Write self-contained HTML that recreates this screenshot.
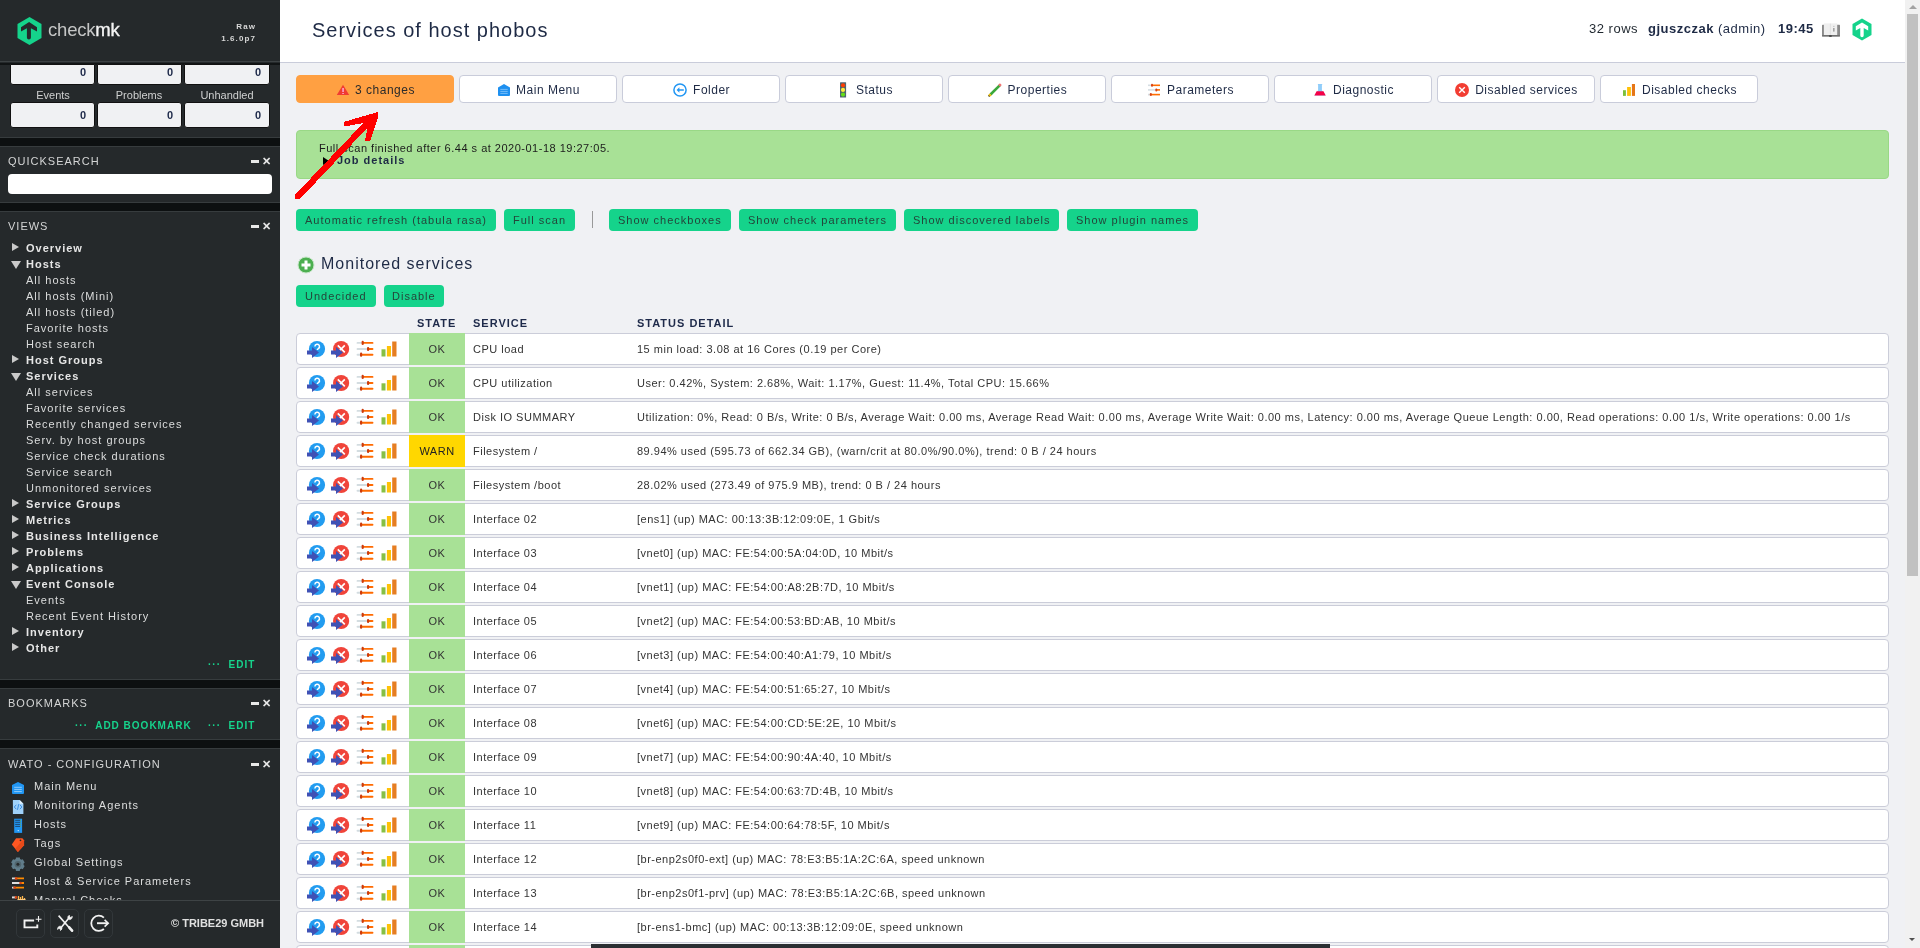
<!DOCTYPE html><html><head><meta charset="utf-8"><style>
*{box-sizing:border-box;margin:0;padding:0}
html,body{width:1920px;height:948px;overflow:hidden;font-family:"Liberation Sans",sans-serif;background:#f0f1f4}
#side,#main{will-change:transform}
.a{position:absolute;white-space:nowrap}
#side{position:absolute;left:0;top:0;width:280px;height:948px;background:#25292b;overflow:hidden;color:#dcdddd}
#main{position:absolute;left:280px;top:0;width:1625px;height:948px;background:#f0f1f4;overflow:hidden;color:#1e262e}
.sb{font-size:11px;letter-spacing:1px;line-height:16px}
.sbh{font-weight:bold;color:#e6e6e6}
.tri{position:absolute;width:0;height:0}
.tr{border-left:7.7px solid #c9c9c9;border-top:4.2px solid transparent;border-bottom:4.2px solid transparent}
.td{border-top:8.5px solid #c9c9c9;border-left:5px solid transparent;border-right:5px solid transparent}
.snap{position:absolute;left:0;width:280px;border-top:1px solid #373c3e;border-bottom:1px solid #373c3e;background:#25292b}
.stitle{position:absolute;left:8px;font-size:11px;letter-spacing:1px;color:#d4d5d5}
.mini{position:absolute;left:251px;width:8px;height:3px;background:#e8e8e8}
.clo{position:absolute;left:262px;font-size:11px;font-weight:bold;color:#e8e8e8;line-height:10px}
.tbox{position:absolute;height:21px;width:85px;background:#f0f1f3;border:1px solid #111;border-radius:3px;font-size:11px;font-weight:bold;color:#1e2a4a;text-align:right;padding-right:7px;line-height:14px}
.green{color:#16d38c;font-weight:bold;font-size:10px}
.cb{position:absolute;top:75px;height:28px;width:158px;background:#fff;border:1px solid #c9ccda;border-radius:4px;font-size:12px;letter-spacing:0.5px;color:#1e262e;text-align:center;line-height:28px}
.gb{position:absolute;height:22px;background:#15d38b;border-radius:4px;font-size:11px;letter-spacing:1px;color:#24453a;line-height:22px;padding:0 9px}
.row{position:absolute;left:16px;width:1593px;height:32px;background:#fff;border:1px solid #cbcdd9;border-radius:4px;font-size:11px;letter-spacing:0.5px;color:#333}
.st{position:absolute;left:112px;top:-1px;width:56px;height:32px;background:#a8e196;text-align:center;line-height:33px;color:#333}
.warn{background:#ffd700;color:#222}
.sv{position:absolute;left:176px;top:0;line-height:30px}
.dt{position:absolute;left:340px;top:0;line-height:30px}
.hd{position:absolute;top:317px;font-size:11px;font-weight:bold;letter-spacing:1px;color:#1e2a4a}
</style></head><body>
<div id="side">
<div class="a" style="left:0;top:0;width:280px;height:62px;background:#25292b;border-bottom:1px solid #3c4143"></div>
<svg class="a" style="left:16px;top:16px" width="27" height="30" viewBox="0 0 27 30"><path d="M13.5 1L25.5 8v14L13.5 29 1.5 22V8z" fill="#15d38b"/><path d="M13.1 5.9L5 11.2v4.3l5.9-3.3v9.3a2 2 0 0 0 4 0v-9.3l6.1 3.3v-4.3z" fill="#25292b"/></svg>
<div class="a" style="left:48px;top:19px;font-size:18.5px;color:#c4c5c5;letter-spacing:-0.2px">check<span style="color:#f4f4f4;-webkit-text-stroke:0.35px #f4f4f4">mk</span></div>
<div class="a" style="left:210px;top:21px;width:46px;text-align:right;font-size:8px;font-weight:bold;letter-spacing:1.1px;color:#d8d8d8;line-height:12px">Raw<br>1.6.0p7</div>
<div class="a" style="left:0;top:63px;width:280px;height:75px;background:#25292b;border-bottom:1px solid #373c3e"></div>
<div class="a" style="left:0;top:63px;width:280px;height:2px;background:#111415"></div>
<div class="tbox" style="left:10px;top:64px;height:21px;padding-top:0;padding-right:8px;border-radius:0 0 3px 3px">0</div>
<div class="tbox" style="left:10px;top:102px;height:26px;padding-top:5px;padding-right:8px">0</div>
<div class="tbox" style="left:97px;top:64px;height:21px;padding-top:0;padding-right:8px;border-radius:0 0 3px 3px">0</div>
<div class="tbox" style="left:97px;top:102px;height:26px;padding-top:5px;padding-right:8px">0</div>
<div class="tbox" style="left:184px;top:64px;height:21px;padding-top:0;padding-right:8px;border-radius:0 0 3px 3px;width:86px">0</div>
<div class="tbox" style="left:184px;top:102px;height:26px;padding-top:5px;padding-right:8px;width:86px">0</div>
<div class="a" style="left:3px;width:100px;text-align:center;top:89px;font-size:11px;color:#cfd0d0">Events</div>
<div class="a" style="left:89px;width:100px;text-align:center;top:89px;font-size:11px;color:#cfd0d0">Problems</div>
<div class="a" style="left:177px;width:100px;text-align:center;top:89px;font-size:11px;color:#cfd0d0">Unhandled</div>
<div class="a" style="left:0;top:138px;width:280px;height:8px;background:#0d1011"></div>
<div class="snap" style="top:146px;height:57px"></div>
<div class="stitle" style="top:155px">QUICKSEARCH</div>
<div class="mini" style="top:160px"></div><div class="clo" style="top:156px">&#x2715;</div>
<div class="a" style="left:8px;top:174px;width:264px;height:20px;background:#fff;border-radius:4px"></div>
<div class="a" style="left:0;top:203px;width:280px;height:8px;background:#0d1011"></div>
<div class="snap" style="top:211px;height:469px"></div>
<div class="stitle" style="top:220px">VIEWS</div>
<div class="mini" style="top:225px"></div><div class="clo" style="top:221px">&#x2715;</div>
<div class="a sb sbh" style="left:26px;top:240px">Overview</div>
<div class="tri tr" style="left:12px;top:243px"></div>
<div class="a sb sbh" style="left:26px;top:256px">Hosts</div>
<div class="tri td" style="left:11px;top:261px"></div>
<div class="a sb" style="left:26px;top:272px">All hosts</div>
<div class="a sb" style="left:26px;top:288px">All hosts (Mini)</div>
<div class="a sb" style="left:26px;top:304px">All hosts (tiled)</div>
<div class="a sb" style="left:26px;top:320px">Favorite hosts</div>
<div class="a sb" style="left:26px;top:336px">Host search</div>
<div class="a sb sbh" style="left:26px;top:352px">Host Groups</div>
<div class="tri tr" style="left:12px;top:355px"></div>
<div class="a sb sbh" style="left:26px;top:368px">Services</div>
<div class="tri td" style="left:11px;top:373px"></div>
<div class="a sb" style="left:26px;top:384px">All services</div>
<div class="a sb" style="left:26px;top:400px">Favorite services</div>
<div class="a sb" style="left:26px;top:416px">Recently changed services</div>
<div class="a sb" style="left:26px;top:432px">Serv. by host groups</div>
<div class="a sb" style="left:26px;top:448px">Service check durations</div>
<div class="a sb" style="left:26px;top:464px">Service search</div>
<div class="a sb" style="left:26px;top:480px">Unmonitored services</div>
<div class="a sb sbh" style="left:26px;top:496px">Service Groups</div>
<div class="tri tr" style="left:12px;top:499px"></div>
<div class="a sb sbh" style="left:26px;top:512px">Metrics</div>
<div class="tri tr" style="left:12px;top:515px"></div>
<div class="a sb sbh" style="left:26px;top:528px">Business Intelligence</div>
<div class="tri tr" style="left:12px;top:531px"></div>
<div class="a sb sbh" style="left:26px;top:544px">Problems</div>
<div class="tri tr" style="left:12px;top:547px"></div>
<div class="a sb sbh" style="left:26px;top:560px">Applications</div>
<div class="tri tr" style="left:12px;top:563px"></div>
<div class="a sb sbh" style="left:26px;top:576px">Event Console</div>
<div class="tri td" style="left:11px;top:581px"></div>
<div class="a sb" style="left:26px;top:592px">Events</div>
<div class="a sb" style="left:26px;top:608px">Recent Event History</div>
<div class="a sb sbh" style="left:26px;top:624px">Inventory</div>
<div class="tri tr" style="left:12px;top:627px"></div>
<div class="a sb sbh" style="left:26px;top:640px">Other</div>
<div class="tri tr" style="left:12px;top:643px"></div>
<div class="a sb green" style="left:208px;top:657px">&middot;&middot;&middot;&nbsp; EDIT</div>
<div class="a" style="left:0;top:680px;width:280px;height:8px;background:#0d1011"></div>
<div class="snap" style="top:688px;height:52px"></div>
<div class="stitle" style="top:697px">BOOKMARKS</div>
<div class="mini" style="top:702px"></div><div class="clo" style="top:698px">&#x2715;</div>
<div class="a sb green" style="left:75px;top:718px">&middot;&middot;&middot;&nbsp; ADD BOOKMARK</div>
<div class="a sb green" style="left:208px;top:718px">&middot;&middot;&middot;&nbsp; EDIT</div>
<div class="a" style="left:0;top:740px;width:280px;height:8px;background:#0d1011"></div>
<div class="snap" style="top:748px;height:160px"></div>
<div class="stitle" style="top:758px">WATO - CONFIGURATION</div>
<div class="mini" style="top:763px"></div><div class="clo" style="top:759px">&#x2715;</div>
<div class="a sb" style="left:34px;top:778px">Main Menu</div>
<div class="a sb" style="left:34px;top:797px">Monitoring Agents</div>
<div class="a sb" style="left:34px;top:816px">Hosts</div>
<div class="a sb" style="left:34px;top:835px">Tags</div>
<div class="a sb" style="left:34px;top:854px">Global Settings</div>
<div class="a sb" style="left:34px;top:873px">Host &amp; Service Parameters</div>
<div class="a sb" style="left:34px;top:892px">Manual Checks</div>
<svg class="a" style="left:10px;top:780px" width="18" height="125" viewBox="0 0 18 125"><path d="M2 5.1L8 2l6 3.1V13a1 1 0 0 1-1 1H3a1 1 0 0 1-1-1z" fill="#2196f3"/><path d="M4.2 7.3h7.6M4.2 9.4h7.6M4.2 11.6h7.6" stroke="#9dd0fb" stroke-width=".9"/><path d="M2.9 20h6.7l3.8 3.8V33.9H2.9z" fill="#9fd1fa"/><path d="M9.6 20l3.8 3.8H9.6z" fill="#e3f2fd"/><path d="M6.3 24.8l-2 2.2 2 2.2M9.9 24.8l2 2.2-2 2.2M8.7 24.2l-1.2 5.6" stroke="#2f86e0" stroke-width=".9" fill="none"/><rect x="4.2" y="38.7" width="7.9" height="14.2" fill="#2196f3"/><path d="M5.2 40.3h5.5M5.2 42.3h5.5M5.2 44.4h5.5M5.2 46.4h5.5" stroke="#1b3550" stroke-width=".8"/><circle cx="10.6" cy="40.3" r=".5" fill="#8bc34a"/><circle cx="10.6" cy="42.3" r=".5" fill="#8bc34a"/><circle cx="10.6" cy="44.4" r=".5" fill="#8bc34a"/><circle cx="10.6" cy="46.4" r=".5" fill="#8bc34a"/><circle cx="8.2" cy="50.6" r=".6" fill="#fff"/><path d="M6.1 58.3h6.3l1.65 1.9v5.1L7.9 72 1.8 64.6z" fill="#ff5722"/><path d="M14.05 60.2v5.1L7.9 72 5.2 68.8 12.4 60.4z" fill="#e64a19"/><circle cx="10.5" cy="60.3" r=".9" fill="#25292b"/><g transform="translate(7.9 84.2)"><path d="M-2.20 -4.93 L-1.93 -6.73 L1.93 -6.73 L2.20 -4.93 L3.17 -4.37 L4.86 -5.04 L6.79 -1.69 L5.37 -0.56 L5.37 0.56 L6.79 1.69 L4.86 5.04 L3.17 4.37 L2.20 4.93 L1.93 6.73 L-1.93 6.73 L-2.20 4.93 L-3.17 4.37 L-4.86 5.04 L-6.79 1.69 L-5.37 0.56 L-5.37 -0.56 L-6.79 -1.69 L-4.86 -5.04 L-3.17 -4.37z" fill="#607d8b"/><circle r="5.5" fill="#607d8b"/><circle r="3.3" fill="#51666f"/><circle r="1.5" fill="#25292b"/></g><path d="M2 98.4h4M2 103h8.5M2 107.6h3" stroke="#dedede" stroke-width="1.9"/><path d="M6 98.4h8M10.5 103h3.5M5 107.6h9" stroke="#ff8a00" stroke-width="1.9"/><circle cx="6.1" cy="98.4" r="1.3" fill="#d84315"/><circle cx="10.5" cy="103" r="1.3" fill="#d84315"/><circle cx="4.6" cy="107.6" r="1.3" fill="#d84315"/><path d="M2 117.4h4" stroke="#dedede" stroke-width="1.9"/><circle cx="6" cy="117.4" r="1.3" fill="#d84315"/><path d="M8.5 116v4.5M10.5 117v3.5M12.5 116v4.5M14.5 118v2.5" stroke="#ffb74d" stroke-width="1.3"/><path d="M7.5 119.5h8" stroke="#ffcc80" stroke-width="1"/></svg>
<div class="a" style="left:0;top:900px;width:280px;height:48px;background:#25292b;border-top:1px solid #3e4345"></div>
<div class="a" style="left:16px;top:909px;width:29px;height:29px;border:1px solid #32373a;border-radius:5px"></div>
<div class="a" style="left:50px;top:909px;width:29px;height:29px;border:1px solid #32373a;border-radius:5px"></div>
<div class="a" style="left:84px;top:909px;width:29px;height:29px;border:1px solid #32373a;border-radius:5px"></div>
<svg class="a" style="left:16px;top:909px" width="100" height="29" viewBox="0 0 100 29"><path d="M18.1 11.5H8.5V18.4H21.3V15.5" fill="none" stroke="#f2f2f2" stroke-width="1.9"/><path d="M22.5 7v5.8M19.7 10.3h5.8" stroke="#f2f2f2" stroke-width="1.1"/><path d="M42.6 6.6L54.6 20.2" stroke="#f2f2f2" stroke-width="1.6"/><path d="M53.2 18.3l2.9 3.4" stroke="#f2f2f2" stroke-width="2.6" stroke-linecap="round"/><path d="M53.5 8.2L44.4 19.6" stroke="#f2f2f2" stroke-width="1.6"/><path d="M52.2 9.8a2.6 2.6 0 0 1 1.1-3.5l.4 1.9 1.4.3 1-1.2a2.6 2.6 0 0 1-2.6 3.3zM45.6 18a2.6 2.6 0 0 1-1.1 3.5l-.4-1.9-1.4-.3-1 1.2a2.6 2.6 0 0 1 2.6-3.3z" fill="#f2f2f2" stroke="#f2f2f2" stroke-width=".8"/><path d="M87.9 8.6A7.6 7.6 0 1 0 87.9 20" fill="none" stroke="#f2f2f2" stroke-width="1.8"/><path d="M81 14.2h11" stroke="#f2f2f2" stroke-width="1.9"/><path d="M88.6 10.8l3.6 3.4-3.6 3.4" fill="none" stroke="#f2f2f2" stroke-width="1.6"/></svg>
<div class="a" style="left:171px;top:917px;font-size:11px;font-weight:bold;color:#e0e0e0">&copy; TRIBE29 GMBH</div>
</div>
<div id="main">
<div class="a" style="left:0;top:0;width:1625px;height:63px;background:#fff;border-bottom:1px solid #c9ccda"></div>
<div class="a" style="left:32px;top:19px;font-size:20px;letter-spacing:1px;color:#1e2a45">Services of host phobos</div>
<div class="a" style="left:1309px;top:21px;font-size:13px;letter-spacing:0.5px;color:#1e262e">32 rows</div>
<div class="a" style="left:1368px;top:21px;font-size:13px;letter-spacing:0.5px;color:#1e2a45"><b>gjuszczak</b> (admin)</div>
<div class="a" style="left:1498px;top:21px;font-size:13px;letter-spacing:0.5px;font-weight:bold;color:#1e2a45">19:45</div>
<svg class="a" style="left:1541px;top:22px" width="20" height="17" viewBox="0 0 20 17"><rect x="1" y="2.8" width="18" height="11.7" rx=".6" fill="#8a8a8a"/><rect x="2.9" y="1.4" width="13.3" height="11.6" fill="#efefef"/><path d="M9.4 1.6v11.2" stroke="#dcdcdc" stroke-width=".8"/><rect x="12" y="6" width="1.6" height="3.6" fill="#a3a3a3"/><rect x="12" y="3.9" width="1.6" height=".8" fill="#bbb"/><path d="M1.2 13.2h17.6v1.2H1.2z" fill="#6a6a6a"/><ellipse cx="9.4" cy="14" rx="1.6" ry=".9" fill="#4a4a4a"/></svg>
<svg class="a" style="left:1571px;top:18px" width="22" height="23" viewBox="0 0 22 23"><path d="M11 0.5L20.5 6v11L11 22.5 1.5 17V6z" fill="#15d38b"/><path d="M11 4.5L4.8 8.3v4.1l4.5-2.4V17.5a1.7 1.7 0 0 0 3.4 0V10l4.5 2.4V8.3z" fill="#fff"/></svg>
<div class="cb" style="left:16px;background:#ffa042;border-color:#ffa042"></div>
<div class="a" style="left:75.1px;top:83px;font-size:12px;letter-spacing:0.5px;color:#2b2b2b">3 changes</div>
<div class="cb" style="left:179px"></div>
<div class="a" style="left:236.1px;top:83px;font-size:12px;letter-spacing:0.5px;color:#1e2a45">Main Menu</div>
<div class="cb" style="left:342px"></div>
<div class="a" style="left:413.1px;top:83px;font-size:12px;letter-spacing:0.5px;color:#1e2a45">Folder</div>
<div class="cb" style="left:505px"></div>
<div class="a" style="left:575.9px;top:83px;font-size:12px;letter-spacing:0.5px;color:#1e2a45">Status</div>
<div class="cb" style="left:668px"></div>
<div class="a" style="left:727.6px;top:83px;font-size:12px;letter-spacing:0.5px;color:#1e2a45">Properties</div>
<div class="cb" style="left:831px"></div>
<div class="a" style="left:887.0px;top:83px;font-size:12px;letter-spacing:0.5px;color:#1e2a45">Parameters</div>
<div class="cb" style="left:994px"></div>
<div class="a" style="left:1053.0px;top:83px;font-size:12px;letter-spacing:0.5px;color:#1e2a45">Diagnostic</div>
<div class="cb" style="left:1157px"></div>
<div class="a" style="left:1195.2px;top:83px;font-size:12px;letter-spacing:0.5px;color:#1e2a45">Disabled services</div>
<div class="cb" style="left:1320px"></div>
<div class="a" style="left:1362.0px;top:83px;font-size:12px;letter-spacing:0.5px;color:#1e2a45">Disabled checks</div>
<svg class="a" style="left:-280px;top:0" width="1920" height="110" viewBox="0 0 1920 110"><path d="M343 84.7L349.2 95H336.8z" fill="#f03c32"/><path d="M342.4 88h1.3v4h-1.3zM342.4 93h1.3v1.1h-1.3z" fill="#fbe"/><path d="M498 87.5L504 84l6 3.5V95a1 1 0 0 1-1 1h-10a1 1 0 0 1-1-1z" fill="#1e90f0"/><path d="M500.3 89.4h7.4M500.3 91.4h7.4M500.3 93.4h7.4" stroke="#8cc8fa" stroke-width=".8"/><circle cx="680" cy="90" r="6.1" fill="none" stroke="#2196f3" stroke-width="1.5"/><path d="M676.6 90l2.8-2.7v1.9h4.4v1.6h-4.4v1.9z" fill="#2196f3"/><rect x="840" y="82.3" width="6.1" height="15.2" rx=".5" fill="#4f6470"/><circle cx="843" cy="85.3" r="2.1" fill="#ff3d00"/><circle cx="843" cy="89.9" r="2.1" fill="#ffeb3b"/><circle cx="843" cy="94.6" r="2.1" fill="#64dd17"/><path d="M990.5 94.5L999.7 85.3" stroke="#3aa83a" stroke-width="2.6"/><path d="M999.2 85.8l1.6-1.6" stroke="#f07070" stroke-width="2.6"/><path d="M988.8 96.2l1.9-1.9" stroke="#e8b800" stroke-width="2.4"/><path d="M988.6 96.4l.6-.6" stroke="#333" stroke-width="1.5"/><g stroke-width="1.6"><path d="M1148 85.3h3" stroke="#d5dde2"/><path d="M1152 85.3h8" stroke="#ff6d00"/><path d="M1148 89.9h7.5" stroke="#d5dde2"/><path d="M1156 89.9h4" stroke="#ff6d00"/><path d="M1148 94.6h2" stroke="#d5dde2"/><path d="M1151 94.6h9" stroke="#ff6d00"/></g><rect x="1151" y="83.8" width="2" height="3" rx="1" fill="#d84315"/><rect x="1155.3" y="88.4" width="2" height="3" rx="1" fill="#d84315"/><rect x="1149.8" y="93.1" width="2" height="3" rx="1" fill="#d84315"/><path d="M1317.9 84h4.3v1h-.3v5.3l3.8 5.2h-11.4l3.8-5.2V85h-.2z" fill="#90cdfa"/><path d="M1316.6 91.2h6.9l2.2 4.3h-11.3z" fill="#f50047"/><circle cx="1462" cy="90" r="7" fill="#f23d32"/><path d="M1459.2 87.2l5.6 5.6M1464.8 87.2l-5.6 5.6" stroke="#fff" stroke-width="1.4"/><rect x="1623" y="90.2" width="2.9" height="5.7" fill="#7cc03a"/><rect x="1627.1" y="87" width="3.8" height="8.9" fill="#ffc107"/><rect x="1631.9" y="84" width="3.1" height="11.9" fill="#e67617"/></svg>
<div class="a" style="left:16px;top:130px;width:1593px;height:49px;background:#a8e196;border:1px solid #99d886;border-radius:4px"></div>
<div class="a" style="left:39px;top:142px;font-size:11px;letter-spacing:0.5px;color:#1c1c1c">Full scan finished after 6.44 s at 2020-01-18 19:27:05.</div>
<div class="a" style="left:42px;top:154px;font-size:11px;font-weight:bold;letter-spacing:1px;color:#1e2a45"><span style="display:inline-block;width:0;height:0;border-left:6px solid #000;border-top:4.8px solid transparent;border-bottom:4.8px solid transparent;margin-right:8px;margin-left:1px;vertical-align:-1px"></span>Job details</div>
<div class="gb" style="left:16px;top:209px">Automatic refresh (tabula rasa)</div>
<div class="gb" style="left:224px;top:209px">Full scan</div>
<div class="gb" style="left:329px;top:209px">Show checkboxes</div>
<div class="gb" style="left:459px;top:209px">Show check parameters</div>
<div class="gb" style="left:624px;top:209px;padding-right:8px">Show discovered labels</div>
<div class="gb" style="left:787px;top:209px">Show plugin names</div>
<div class="a" style="left:312px;top:211px;width:1px;height:17px;background:#999"></div>
<svg class="a" style="left:17px;top:256px" width="18" height="18" viewBox="0 0 18 18"><circle cx="9" cy="9" r="8" fill="#4caf50" stroke="#c8e6c9" stroke-width="1"/><path d="M9 4.5v9M4.5 9h9" stroke="#fff" stroke-width="3"/></svg>
<div class="a" style="left:41px;top:255px;font-size:16px;letter-spacing:1px;color:#1e2a45">Monitored services</div>
<div class="gb" style="left:16px;top:285px">Undecided</div>
<div class="gb" style="left:104px;top:285px;padding:0 8px">Disable</div>
<div class="hd" style="left:137px">STATE</div><div class="hd" style="left:193px">SERVICE</div><div class="hd" style="left:357px">STATUS DETAIL</div>
<div class="row" style="top:333px"><svg class="a" style="left:9px;top:5px" width="100" height="22" viewBox="0 0 100 22"><circle cx="11" cy="10" r="8.1" fill="#229cf0"/><path d="M8.9 7.6a2.3 2.3 0 1 1 3.4 2c-.8.45-1 .8-1 1.5" stroke="#fff" stroke-width="1.5" fill="none"/><path d="M1 11.5h5V8l7 5.6-7 5.4v-3.4H1z" fill="#3f51b5"/><circle cx="35.1" cy="10" r="8.1" fill="#f0443a"/><path d="M31.8 6.4l7 7M38.8 6.4l-7 7" stroke="#fff" stroke-width="1.6"/><path d="M25 11.5h5V8l7 5.6-7 5.4v-3.4H25z" fill="#3f51b5"/><g stroke-linecap="round" stroke-width="1.9"><path d="M51.5 3.9h4.5" stroke="#d3dce0"/><path d="M57 3.9h9.5" stroke="#ff6a00"/><path d="M51.5 10h10" stroke="#d3dce0"/><path d="M62.5 10h4" stroke="#ff6a00"/><path d="M51.5 15.7h3" stroke="#d3dce0"/><path d="M55.5 15.7h11" stroke="#ff6a00"/></g><rect x="55.6" y="1.8" width="2.2" height="4.2" rx="1.1" fill="#cc3b0c"/><rect x="61" y="7.9" width="2.2" height="4.2" rx="1.1" fill="#cc3b0c"/><rect x="54" y="13.6" width="2.2" height="4.2" rx="1.1" fill="#cc3b0c"/><rect x="75.5" y="10.3" width="4" height="7.2" fill="#86c044"/><rect x="80.9" y="7" width="4.1" height="10.5" fill="#ffc107"/><rect x="86.2" y="2.5" width="4.3" height="15" fill="#e67e22"/></svg><div class="st">OK</div><div class="sv">CPU load</div><div class="dt">15 min load: 3.08 at 16 Cores (0.19 per Core)</div></div>
<div class="row" style="top:367px"><svg class="a" style="left:9px;top:5px" width="100" height="22" viewBox="0 0 100 22"><circle cx="11" cy="10" r="8.1" fill="#229cf0"/><path d="M8.9 7.6a2.3 2.3 0 1 1 3.4 2c-.8.45-1 .8-1 1.5" stroke="#fff" stroke-width="1.5" fill="none"/><path d="M1 11.5h5V8l7 5.6-7 5.4v-3.4H1z" fill="#3f51b5"/><circle cx="35.1" cy="10" r="8.1" fill="#f0443a"/><path d="M31.8 6.4l7 7M38.8 6.4l-7 7" stroke="#fff" stroke-width="1.6"/><path d="M25 11.5h5V8l7 5.6-7 5.4v-3.4H25z" fill="#3f51b5"/><g stroke-linecap="round" stroke-width="1.9"><path d="M51.5 3.9h4.5" stroke="#d3dce0"/><path d="M57 3.9h9.5" stroke="#ff6a00"/><path d="M51.5 10h10" stroke="#d3dce0"/><path d="M62.5 10h4" stroke="#ff6a00"/><path d="M51.5 15.7h3" stroke="#d3dce0"/><path d="M55.5 15.7h11" stroke="#ff6a00"/></g><rect x="55.6" y="1.8" width="2.2" height="4.2" rx="1.1" fill="#cc3b0c"/><rect x="61" y="7.9" width="2.2" height="4.2" rx="1.1" fill="#cc3b0c"/><rect x="54" y="13.6" width="2.2" height="4.2" rx="1.1" fill="#cc3b0c"/><rect x="75.5" y="10.3" width="4" height="7.2" fill="#86c044"/><rect x="80.9" y="7" width="4.1" height="10.5" fill="#ffc107"/><rect x="86.2" y="2.5" width="4.3" height="15" fill="#e67e22"/></svg><div class="st">OK</div><div class="sv">CPU utilization</div><div class="dt">User: 0.42%, System: 2.68%, Wait: 1.17%, Guest: 11.4%, Total CPU: 15.66%</div></div>
<div class="row" style="top:401px"><svg class="a" style="left:9px;top:5px" width="100" height="22" viewBox="0 0 100 22"><circle cx="11" cy="10" r="8.1" fill="#229cf0"/><path d="M8.9 7.6a2.3 2.3 0 1 1 3.4 2c-.8.45-1 .8-1 1.5" stroke="#fff" stroke-width="1.5" fill="none"/><path d="M1 11.5h5V8l7 5.6-7 5.4v-3.4H1z" fill="#3f51b5"/><circle cx="35.1" cy="10" r="8.1" fill="#f0443a"/><path d="M31.8 6.4l7 7M38.8 6.4l-7 7" stroke="#fff" stroke-width="1.6"/><path d="M25 11.5h5V8l7 5.6-7 5.4v-3.4H25z" fill="#3f51b5"/><g stroke-linecap="round" stroke-width="1.9"><path d="M51.5 3.9h4.5" stroke="#d3dce0"/><path d="M57 3.9h9.5" stroke="#ff6a00"/><path d="M51.5 10h10" stroke="#d3dce0"/><path d="M62.5 10h4" stroke="#ff6a00"/><path d="M51.5 15.7h3" stroke="#d3dce0"/><path d="M55.5 15.7h11" stroke="#ff6a00"/></g><rect x="55.6" y="1.8" width="2.2" height="4.2" rx="1.1" fill="#cc3b0c"/><rect x="61" y="7.9" width="2.2" height="4.2" rx="1.1" fill="#cc3b0c"/><rect x="54" y="13.6" width="2.2" height="4.2" rx="1.1" fill="#cc3b0c"/><rect x="75.5" y="10.3" width="4" height="7.2" fill="#86c044"/><rect x="80.9" y="7" width="4.1" height="10.5" fill="#ffc107"/><rect x="86.2" y="2.5" width="4.3" height="15" fill="#e67e22"/></svg><div class="st">OK</div><div class="sv">Disk IO SUMMARY</div><div class="dt">Utilization: 0%, Read: 0 B/s, Write: 0 B/s, Average Wait: 0.00 ms, Average Read Wait: 0.00 ms, Average Write Wait: 0.00 ms, Latency: 0.00 ms, Average Queue Length: 0.00, Read operations: 0.00 1/s, Write operations: 0.00 1/s</div></div>
<div class="row" style="top:435px"><svg class="a" style="left:9px;top:5px" width="100" height="22" viewBox="0 0 100 22"><circle cx="11" cy="10" r="8.1" fill="#229cf0"/><path d="M8.9 7.6a2.3 2.3 0 1 1 3.4 2c-.8.45-1 .8-1 1.5" stroke="#fff" stroke-width="1.5" fill="none"/><path d="M1 11.5h5V8l7 5.6-7 5.4v-3.4H1z" fill="#3f51b5"/><circle cx="35.1" cy="10" r="8.1" fill="#f0443a"/><path d="M31.8 6.4l7 7M38.8 6.4l-7 7" stroke="#fff" stroke-width="1.6"/><path d="M25 11.5h5V8l7 5.6-7 5.4v-3.4H25z" fill="#3f51b5"/><g stroke-linecap="round" stroke-width="1.9"><path d="M51.5 3.9h4.5" stroke="#d3dce0"/><path d="M57 3.9h9.5" stroke="#ff6a00"/><path d="M51.5 10h10" stroke="#d3dce0"/><path d="M62.5 10h4" stroke="#ff6a00"/><path d="M51.5 15.7h3" stroke="#d3dce0"/><path d="M55.5 15.7h11" stroke="#ff6a00"/></g><rect x="55.6" y="1.8" width="2.2" height="4.2" rx="1.1" fill="#cc3b0c"/><rect x="61" y="7.9" width="2.2" height="4.2" rx="1.1" fill="#cc3b0c"/><rect x="54" y="13.6" width="2.2" height="4.2" rx="1.1" fill="#cc3b0c"/><rect x="75.5" y="10.3" width="4" height="7.2" fill="#86c044"/><rect x="80.9" y="7" width="4.1" height="10.5" fill="#ffc107"/><rect x="86.2" y="2.5" width="4.3" height="15" fill="#e67e22"/></svg><div class="st warn">WARN</div><div class="sv">Filesystem /</div><div class="dt">89.94% used (595.73 of 662.34 GB), (warn/crit at 80.0%/90.0%), trend: 0 B / 24 hours</div></div>
<div class="row" style="top:469px"><svg class="a" style="left:9px;top:5px" width="100" height="22" viewBox="0 0 100 22"><circle cx="11" cy="10" r="8.1" fill="#229cf0"/><path d="M8.9 7.6a2.3 2.3 0 1 1 3.4 2c-.8.45-1 .8-1 1.5" stroke="#fff" stroke-width="1.5" fill="none"/><path d="M1 11.5h5V8l7 5.6-7 5.4v-3.4H1z" fill="#3f51b5"/><circle cx="35.1" cy="10" r="8.1" fill="#f0443a"/><path d="M31.8 6.4l7 7M38.8 6.4l-7 7" stroke="#fff" stroke-width="1.6"/><path d="M25 11.5h5V8l7 5.6-7 5.4v-3.4H25z" fill="#3f51b5"/><g stroke-linecap="round" stroke-width="1.9"><path d="M51.5 3.9h4.5" stroke="#d3dce0"/><path d="M57 3.9h9.5" stroke="#ff6a00"/><path d="M51.5 10h10" stroke="#d3dce0"/><path d="M62.5 10h4" stroke="#ff6a00"/><path d="M51.5 15.7h3" stroke="#d3dce0"/><path d="M55.5 15.7h11" stroke="#ff6a00"/></g><rect x="55.6" y="1.8" width="2.2" height="4.2" rx="1.1" fill="#cc3b0c"/><rect x="61" y="7.9" width="2.2" height="4.2" rx="1.1" fill="#cc3b0c"/><rect x="54" y="13.6" width="2.2" height="4.2" rx="1.1" fill="#cc3b0c"/><rect x="75.5" y="10.3" width="4" height="7.2" fill="#86c044"/><rect x="80.9" y="7" width="4.1" height="10.5" fill="#ffc107"/><rect x="86.2" y="2.5" width="4.3" height="15" fill="#e67e22"/></svg><div class="st">OK</div><div class="sv">Filesystem /boot</div><div class="dt">28.02% used (273.49 of 975.9 MB), trend: 0 B / 24 hours</div></div>
<div class="row" style="top:503px"><svg class="a" style="left:9px;top:5px" width="100" height="22" viewBox="0 0 100 22"><circle cx="11" cy="10" r="8.1" fill="#229cf0"/><path d="M8.9 7.6a2.3 2.3 0 1 1 3.4 2c-.8.45-1 .8-1 1.5" stroke="#fff" stroke-width="1.5" fill="none"/><path d="M1 11.5h5V8l7 5.6-7 5.4v-3.4H1z" fill="#3f51b5"/><circle cx="35.1" cy="10" r="8.1" fill="#f0443a"/><path d="M31.8 6.4l7 7M38.8 6.4l-7 7" stroke="#fff" stroke-width="1.6"/><path d="M25 11.5h5V8l7 5.6-7 5.4v-3.4H25z" fill="#3f51b5"/><g stroke-linecap="round" stroke-width="1.9"><path d="M51.5 3.9h4.5" stroke="#d3dce0"/><path d="M57 3.9h9.5" stroke="#ff6a00"/><path d="M51.5 10h10" stroke="#d3dce0"/><path d="M62.5 10h4" stroke="#ff6a00"/><path d="M51.5 15.7h3" stroke="#d3dce0"/><path d="M55.5 15.7h11" stroke="#ff6a00"/></g><rect x="55.6" y="1.8" width="2.2" height="4.2" rx="1.1" fill="#cc3b0c"/><rect x="61" y="7.9" width="2.2" height="4.2" rx="1.1" fill="#cc3b0c"/><rect x="54" y="13.6" width="2.2" height="4.2" rx="1.1" fill="#cc3b0c"/><rect x="75.5" y="10.3" width="4" height="7.2" fill="#86c044"/><rect x="80.9" y="7" width="4.1" height="10.5" fill="#ffc107"/><rect x="86.2" y="2.5" width="4.3" height="15" fill="#e67e22"/></svg><div class="st">OK</div><div class="sv">Interface 02</div><div class="dt">[ens1] (up) MAC: 00:13:3B:12:09:0E, 1 Gbit/s</div></div>
<div class="row" style="top:537px"><svg class="a" style="left:9px;top:5px" width="100" height="22" viewBox="0 0 100 22"><circle cx="11" cy="10" r="8.1" fill="#229cf0"/><path d="M8.9 7.6a2.3 2.3 0 1 1 3.4 2c-.8.45-1 .8-1 1.5" stroke="#fff" stroke-width="1.5" fill="none"/><path d="M1 11.5h5V8l7 5.6-7 5.4v-3.4H1z" fill="#3f51b5"/><circle cx="35.1" cy="10" r="8.1" fill="#f0443a"/><path d="M31.8 6.4l7 7M38.8 6.4l-7 7" stroke="#fff" stroke-width="1.6"/><path d="M25 11.5h5V8l7 5.6-7 5.4v-3.4H25z" fill="#3f51b5"/><g stroke-linecap="round" stroke-width="1.9"><path d="M51.5 3.9h4.5" stroke="#d3dce0"/><path d="M57 3.9h9.5" stroke="#ff6a00"/><path d="M51.5 10h10" stroke="#d3dce0"/><path d="M62.5 10h4" stroke="#ff6a00"/><path d="M51.5 15.7h3" stroke="#d3dce0"/><path d="M55.5 15.7h11" stroke="#ff6a00"/></g><rect x="55.6" y="1.8" width="2.2" height="4.2" rx="1.1" fill="#cc3b0c"/><rect x="61" y="7.9" width="2.2" height="4.2" rx="1.1" fill="#cc3b0c"/><rect x="54" y="13.6" width="2.2" height="4.2" rx="1.1" fill="#cc3b0c"/><rect x="75.5" y="10.3" width="4" height="7.2" fill="#86c044"/><rect x="80.9" y="7" width="4.1" height="10.5" fill="#ffc107"/><rect x="86.2" y="2.5" width="4.3" height="15" fill="#e67e22"/></svg><div class="st">OK</div><div class="sv">Interface 03</div><div class="dt">[vnet0] (up) MAC: FE:54:00:5A:04:0D, 10 Mbit/s</div></div>
<div class="row" style="top:571px"><svg class="a" style="left:9px;top:5px" width="100" height="22" viewBox="0 0 100 22"><circle cx="11" cy="10" r="8.1" fill="#229cf0"/><path d="M8.9 7.6a2.3 2.3 0 1 1 3.4 2c-.8.45-1 .8-1 1.5" stroke="#fff" stroke-width="1.5" fill="none"/><path d="M1 11.5h5V8l7 5.6-7 5.4v-3.4H1z" fill="#3f51b5"/><circle cx="35.1" cy="10" r="8.1" fill="#f0443a"/><path d="M31.8 6.4l7 7M38.8 6.4l-7 7" stroke="#fff" stroke-width="1.6"/><path d="M25 11.5h5V8l7 5.6-7 5.4v-3.4H25z" fill="#3f51b5"/><g stroke-linecap="round" stroke-width="1.9"><path d="M51.5 3.9h4.5" stroke="#d3dce0"/><path d="M57 3.9h9.5" stroke="#ff6a00"/><path d="M51.5 10h10" stroke="#d3dce0"/><path d="M62.5 10h4" stroke="#ff6a00"/><path d="M51.5 15.7h3" stroke="#d3dce0"/><path d="M55.5 15.7h11" stroke="#ff6a00"/></g><rect x="55.6" y="1.8" width="2.2" height="4.2" rx="1.1" fill="#cc3b0c"/><rect x="61" y="7.9" width="2.2" height="4.2" rx="1.1" fill="#cc3b0c"/><rect x="54" y="13.6" width="2.2" height="4.2" rx="1.1" fill="#cc3b0c"/><rect x="75.5" y="10.3" width="4" height="7.2" fill="#86c044"/><rect x="80.9" y="7" width="4.1" height="10.5" fill="#ffc107"/><rect x="86.2" y="2.5" width="4.3" height="15" fill="#e67e22"/></svg><div class="st">OK</div><div class="sv">Interface 04</div><div class="dt">[vnet1] (up) MAC: FE:54:00:A8:2B:7D, 10 Mbit/s</div></div>
<div class="row" style="top:605px"><svg class="a" style="left:9px;top:5px" width="100" height="22" viewBox="0 0 100 22"><circle cx="11" cy="10" r="8.1" fill="#229cf0"/><path d="M8.9 7.6a2.3 2.3 0 1 1 3.4 2c-.8.45-1 .8-1 1.5" stroke="#fff" stroke-width="1.5" fill="none"/><path d="M1 11.5h5V8l7 5.6-7 5.4v-3.4H1z" fill="#3f51b5"/><circle cx="35.1" cy="10" r="8.1" fill="#f0443a"/><path d="M31.8 6.4l7 7M38.8 6.4l-7 7" stroke="#fff" stroke-width="1.6"/><path d="M25 11.5h5V8l7 5.6-7 5.4v-3.4H25z" fill="#3f51b5"/><g stroke-linecap="round" stroke-width="1.9"><path d="M51.5 3.9h4.5" stroke="#d3dce0"/><path d="M57 3.9h9.5" stroke="#ff6a00"/><path d="M51.5 10h10" stroke="#d3dce0"/><path d="M62.5 10h4" stroke="#ff6a00"/><path d="M51.5 15.7h3" stroke="#d3dce0"/><path d="M55.5 15.7h11" stroke="#ff6a00"/></g><rect x="55.6" y="1.8" width="2.2" height="4.2" rx="1.1" fill="#cc3b0c"/><rect x="61" y="7.9" width="2.2" height="4.2" rx="1.1" fill="#cc3b0c"/><rect x="54" y="13.6" width="2.2" height="4.2" rx="1.1" fill="#cc3b0c"/><rect x="75.5" y="10.3" width="4" height="7.2" fill="#86c044"/><rect x="80.9" y="7" width="4.1" height="10.5" fill="#ffc107"/><rect x="86.2" y="2.5" width="4.3" height="15" fill="#e67e22"/></svg><div class="st">OK</div><div class="sv">Interface 05</div><div class="dt">[vnet2] (up) MAC: FE:54:00:53:BD:AB, 10 Mbit/s</div></div>
<div class="row" style="top:639px"><svg class="a" style="left:9px;top:5px" width="100" height="22" viewBox="0 0 100 22"><circle cx="11" cy="10" r="8.1" fill="#229cf0"/><path d="M8.9 7.6a2.3 2.3 0 1 1 3.4 2c-.8.45-1 .8-1 1.5" stroke="#fff" stroke-width="1.5" fill="none"/><path d="M1 11.5h5V8l7 5.6-7 5.4v-3.4H1z" fill="#3f51b5"/><circle cx="35.1" cy="10" r="8.1" fill="#f0443a"/><path d="M31.8 6.4l7 7M38.8 6.4l-7 7" stroke="#fff" stroke-width="1.6"/><path d="M25 11.5h5V8l7 5.6-7 5.4v-3.4H25z" fill="#3f51b5"/><g stroke-linecap="round" stroke-width="1.9"><path d="M51.5 3.9h4.5" stroke="#d3dce0"/><path d="M57 3.9h9.5" stroke="#ff6a00"/><path d="M51.5 10h10" stroke="#d3dce0"/><path d="M62.5 10h4" stroke="#ff6a00"/><path d="M51.5 15.7h3" stroke="#d3dce0"/><path d="M55.5 15.7h11" stroke="#ff6a00"/></g><rect x="55.6" y="1.8" width="2.2" height="4.2" rx="1.1" fill="#cc3b0c"/><rect x="61" y="7.9" width="2.2" height="4.2" rx="1.1" fill="#cc3b0c"/><rect x="54" y="13.6" width="2.2" height="4.2" rx="1.1" fill="#cc3b0c"/><rect x="75.5" y="10.3" width="4" height="7.2" fill="#86c044"/><rect x="80.9" y="7" width="4.1" height="10.5" fill="#ffc107"/><rect x="86.2" y="2.5" width="4.3" height="15" fill="#e67e22"/></svg><div class="st">OK</div><div class="sv">Interface 06</div><div class="dt">[vnet3] (up) MAC: FE:54:00:40:A1:79, 10 Mbit/s</div></div>
<div class="row" style="top:673px"><svg class="a" style="left:9px;top:5px" width="100" height="22" viewBox="0 0 100 22"><circle cx="11" cy="10" r="8.1" fill="#229cf0"/><path d="M8.9 7.6a2.3 2.3 0 1 1 3.4 2c-.8.45-1 .8-1 1.5" stroke="#fff" stroke-width="1.5" fill="none"/><path d="M1 11.5h5V8l7 5.6-7 5.4v-3.4H1z" fill="#3f51b5"/><circle cx="35.1" cy="10" r="8.1" fill="#f0443a"/><path d="M31.8 6.4l7 7M38.8 6.4l-7 7" stroke="#fff" stroke-width="1.6"/><path d="M25 11.5h5V8l7 5.6-7 5.4v-3.4H25z" fill="#3f51b5"/><g stroke-linecap="round" stroke-width="1.9"><path d="M51.5 3.9h4.5" stroke="#d3dce0"/><path d="M57 3.9h9.5" stroke="#ff6a00"/><path d="M51.5 10h10" stroke="#d3dce0"/><path d="M62.5 10h4" stroke="#ff6a00"/><path d="M51.5 15.7h3" stroke="#d3dce0"/><path d="M55.5 15.7h11" stroke="#ff6a00"/></g><rect x="55.6" y="1.8" width="2.2" height="4.2" rx="1.1" fill="#cc3b0c"/><rect x="61" y="7.9" width="2.2" height="4.2" rx="1.1" fill="#cc3b0c"/><rect x="54" y="13.6" width="2.2" height="4.2" rx="1.1" fill="#cc3b0c"/><rect x="75.5" y="10.3" width="4" height="7.2" fill="#86c044"/><rect x="80.9" y="7" width="4.1" height="10.5" fill="#ffc107"/><rect x="86.2" y="2.5" width="4.3" height="15" fill="#e67e22"/></svg><div class="st">OK</div><div class="sv">Interface 07</div><div class="dt">[vnet4] (up) MAC: FE:54:00:51:65:27, 10 Mbit/s</div></div>
<div class="row" style="top:707px"><svg class="a" style="left:9px;top:5px" width="100" height="22" viewBox="0 0 100 22"><circle cx="11" cy="10" r="8.1" fill="#229cf0"/><path d="M8.9 7.6a2.3 2.3 0 1 1 3.4 2c-.8.45-1 .8-1 1.5" stroke="#fff" stroke-width="1.5" fill="none"/><path d="M1 11.5h5V8l7 5.6-7 5.4v-3.4H1z" fill="#3f51b5"/><circle cx="35.1" cy="10" r="8.1" fill="#f0443a"/><path d="M31.8 6.4l7 7M38.8 6.4l-7 7" stroke="#fff" stroke-width="1.6"/><path d="M25 11.5h5V8l7 5.6-7 5.4v-3.4H25z" fill="#3f51b5"/><g stroke-linecap="round" stroke-width="1.9"><path d="M51.5 3.9h4.5" stroke="#d3dce0"/><path d="M57 3.9h9.5" stroke="#ff6a00"/><path d="M51.5 10h10" stroke="#d3dce0"/><path d="M62.5 10h4" stroke="#ff6a00"/><path d="M51.5 15.7h3" stroke="#d3dce0"/><path d="M55.5 15.7h11" stroke="#ff6a00"/></g><rect x="55.6" y="1.8" width="2.2" height="4.2" rx="1.1" fill="#cc3b0c"/><rect x="61" y="7.9" width="2.2" height="4.2" rx="1.1" fill="#cc3b0c"/><rect x="54" y="13.6" width="2.2" height="4.2" rx="1.1" fill="#cc3b0c"/><rect x="75.5" y="10.3" width="4" height="7.2" fill="#86c044"/><rect x="80.9" y="7" width="4.1" height="10.5" fill="#ffc107"/><rect x="86.2" y="2.5" width="4.3" height="15" fill="#e67e22"/></svg><div class="st">OK</div><div class="sv">Interface 08</div><div class="dt">[vnet6] (up) MAC: FE:54:00:CD:5E:2E, 10 Mbit/s</div></div>
<div class="row" style="top:741px"><svg class="a" style="left:9px;top:5px" width="100" height="22" viewBox="0 0 100 22"><circle cx="11" cy="10" r="8.1" fill="#229cf0"/><path d="M8.9 7.6a2.3 2.3 0 1 1 3.4 2c-.8.45-1 .8-1 1.5" stroke="#fff" stroke-width="1.5" fill="none"/><path d="M1 11.5h5V8l7 5.6-7 5.4v-3.4H1z" fill="#3f51b5"/><circle cx="35.1" cy="10" r="8.1" fill="#f0443a"/><path d="M31.8 6.4l7 7M38.8 6.4l-7 7" stroke="#fff" stroke-width="1.6"/><path d="M25 11.5h5V8l7 5.6-7 5.4v-3.4H25z" fill="#3f51b5"/><g stroke-linecap="round" stroke-width="1.9"><path d="M51.5 3.9h4.5" stroke="#d3dce0"/><path d="M57 3.9h9.5" stroke="#ff6a00"/><path d="M51.5 10h10" stroke="#d3dce0"/><path d="M62.5 10h4" stroke="#ff6a00"/><path d="M51.5 15.7h3" stroke="#d3dce0"/><path d="M55.5 15.7h11" stroke="#ff6a00"/></g><rect x="55.6" y="1.8" width="2.2" height="4.2" rx="1.1" fill="#cc3b0c"/><rect x="61" y="7.9" width="2.2" height="4.2" rx="1.1" fill="#cc3b0c"/><rect x="54" y="13.6" width="2.2" height="4.2" rx="1.1" fill="#cc3b0c"/><rect x="75.5" y="10.3" width="4" height="7.2" fill="#86c044"/><rect x="80.9" y="7" width="4.1" height="10.5" fill="#ffc107"/><rect x="86.2" y="2.5" width="4.3" height="15" fill="#e67e22"/></svg><div class="st">OK</div><div class="sv">Interface 09</div><div class="dt">[vnet7] (up) MAC: FE:54:00:90:4A:40, 10 Mbit/s</div></div>
<div class="row" style="top:775px"><svg class="a" style="left:9px;top:5px" width="100" height="22" viewBox="0 0 100 22"><circle cx="11" cy="10" r="8.1" fill="#229cf0"/><path d="M8.9 7.6a2.3 2.3 0 1 1 3.4 2c-.8.45-1 .8-1 1.5" stroke="#fff" stroke-width="1.5" fill="none"/><path d="M1 11.5h5V8l7 5.6-7 5.4v-3.4H1z" fill="#3f51b5"/><circle cx="35.1" cy="10" r="8.1" fill="#f0443a"/><path d="M31.8 6.4l7 7M38.8 6.4l-7 7" stroke="#fff" stroke-width="1.6"/><path d="M25 11.5h5V8l7 5.6-7 5.4v-3.4H25z" fill="#3f51b5"/><g stroke-linecap="round" stroke-width="1.9"><path d="M51.5 3.9h4.5" stroke="#d3dce0"/><path d="M57 3.9h9.5" stroke="#ff6a00"/><path d="M51.5 10h10" stroke="#d3dce0"/><path d="M62.5 10h4" stroke="#ff6a00"/><path d="M51.5 15.7h3" stroke="#d3dce0"/><path d="M55.5 15.7h11" stroke="#ff6a00"/></g><rect x="55.6" y="1.8" width="2.2" height="4.2" rx="1.1" fill="#cc3b0c"/><rect x="61" y="7.9" width="2.2" height="4.2" rx="1.1" fill="#cc3b0c"/><rect x="54" y="13.6" width="2.2" height="4.2" rx="1.1" fill="#cc3b0c"/><rect x="75.5" y="10.3" width="4" height="7.2" fill="#86c044"/><rect x="80.9" y="7" width="4.1" height="10.5" fill="#ffc107"/><rect x="86.2" y="2.5" width="4.3" height="15" fill="#e67e22"/></svg><div class="st">OK</div><div class="sv">Interface 10</div><div class="dt">[vnet8] (up) MAC: FE:54:00:63:7D:4B, 10 Mbit/s</div></div>
<div class="row" style="top:809px"><svg class="a" style="left:9px;top:5px" width="100" height="22" viewBox="0 0 100 22"><circle cx="11" cy="10" r="8.1" fill="#229cf0"/><path d="M8.9 7.6a2.3 2.3 0 1 1 3.4 2c-.8.45-1 .8-1 1.5" stroke="#fff" stroke-width="1.5" fill="none"/><path d="M1 11.5h5V8l7 5.6-7 5.4v-3.4H1z" fill="#3f51b5"/><circle cx="35.1" cy="10" r="8.1" fill="#f0443a"/><path d="M31.8 6.4l7 7M38.8 6.4l-7 7" stroke="#fff" stroke-width="1.6"/><path d="M25 11.5h5V8l7 5.6-7 5.4v-3.4H25z" fill="#3f51b5"/><g stroke-linecap="round" stroke-width="1.9"><path d="M51.5 3.9h4.5" stroke="#d3dce0"/><path d="M57 3.9h9.5" stroke="#ff6a00"/><path d="M51.5 10h10" stroke="#d3dce0"/><path d="M62.5 10h4" stroke="#ff6a00"/><path d="M51.5 15.7h3" stroke="#d3dce0"/><path d="M55.5 15.7h11" stroke="#ff6a00"/></g><rect x="55.6" y="1.8" width="2.2" height="4.2" rx="1.1" fill="#cc3b0c"/><rect x="61" y="7.9" width="2.2" height="4.2" rx="1.1" fill="#cc3b0c"/><rect x="54" y="13.6" width="2.2" height="4.2" rx="1.1" fill="#cc3b0c"/><rect x="75.5" y="10.3" width="4" height="7.2" fill="#86c044"/><rect x="80.9" y="7" width="4.1" height="10.5" fill="#ffc107"/><rect x="86.2" y="2.5" width="4.3" height="15" fill="#e67e22"/></svg><div class="st">OK</div><div class="sv">Interface 11</div><div class="dt">[vnet9] (up) MAC: FE:54:00:64:78:5F, 10 Mbit/s</div></div>
<div class="row" style="top:843px"><svg class="a" style="left:9px;top:5px" width="100" height="22" viewBox="0 0 100 22"><circle cx="11" cy="10" r="8.1" fill="#229cf0"/><path d="M8.9 7.6a2.3 2.3 0 1 1 3.4 2c-.8.45-1 .8-1 1.5" stroke="#fff" stroke-width="1.5" fill="none"/><path d="M1 11.5h5V8l7 5.6-7 5.4v-3.4H1z" fill="#3f51b5"/><circle cx="35.1" cy="10" r="8.1" fill="#f0443a"/><path d="M31.8 6.4l7 7M38.8 6.4l-7 7" stroke="#fff" stroke-width="1.6"/><path d="M25 11.5h5V8l7 5.6-7 5.4v-3.4H25z" fill="#3f51b5"/><g stroke-linecap="round" stroke-width="1.9"><path d="M51.5 3.9h4.5" stroke="#d3dce0"/><path d="M57 3.9h9.5" stroke="#ff6a00"/><path d="M51.5 10h10" stroke="#d3dce0"/><path d="M62.5 10h4" stroke="#ff6a00"/><path d="M51.5 15.7h3" stroke="#d3dce0"/><path d="M55.5 15.7h11" stroke="#ff6a00"/></g><rect x="55.6" y="1.8" width="2.2" height="4.2" rx="1.1" fill="#cc3b0c"/><rect x="61" y="7.9" width="2.2" height="4.2" rx="1.1" fill="#cc3b0c"/><rect x="54" y="13.6" width="2.2" height="4.2" rx="1.1" fill="#cc3b0c"/><rect x="75.5" y="10.3" width="4" height="7.2" fill="#86c044"/><rect x="80.9" y="7" width="4.1" height="10.5" fill="#ffc107"/><rect x="86.2" y="2.5" width="4.3" height="15" fill="#e67e22"/></svg><div class="st">OK</div><div class="sv">Interface 12</div><div class="dt">[br-enp2s0f0-ext] (up) MAC: 78:E3:B5:1A:2C:6A, speed unknown</div></div>
<div class="row" style="top:877px"><svg class="a" style="left:9px;top:5px" width="100" height="22" viewBox="0 0 100 22"><circle cx="11" cy="10" r="8.1" fill="#229cf0"/><path d="M8.9 7.6a2.3 2.3 0 1 1 3.4 2c-.8.45-1 .8-1 1.5" stroke="#fff" stroke-width="1.5" fill="none"/><path d="M1 11.5h5V8l7 5.6-7 5.4v-3.4H1z" fill="#3f51b5"/><circle cx="35.1" cy="10" r="8.1" fill="#f0443a"/><path d="M31.8 6.4l7 7M38.8 6.4l-7 7" stroke="#fff" stroke-width="1.6"/><path d="M25 11.5h5V8l7 5.6-7 5.4v-3.4H25z" fill="#3f51b5"/><g stroke-linecap="round" stroke-width="1.9"><path d="M51.5 3.9h4.5" stroke="#d3dce0"/><path d="M57 3.9h9.5" stroke="#ff6a00"/><path d="M51.5 10h10" stroke="#d3dce0"/><path d="M62.5 10h4" stroke="#ff6a00"/><path d="M51.5 15.7h3" stroke="#d3dce0"/><path d="M55.5 15.7h11" stroke="#ff6a00"/></g><rect x="55.6" y="1.8" width="2.2" height="4.2" rx="1.1" fill="#cc3b0c"/><rect x="61" y="7.9" width="2.2" height="4.2" rx="1.1" fill="#cc3b0c"/><rect x="54" y="13.6" width="2.2" height="4.2" rx="1.1" fill="#cc3b0c"/><rect x="75.5" y="10.3" width="4" height="7.2" fill="#86c044"/><rect x="80.9" y="7" width="4.1" height="10.5" fill="#ffc107"/><rect x="86.2" y="2.5" width="4.3" height="15" fill="#e67e22"/></svg><div class="st">OK</div><div class="sv">Interface 13</div><div class="dt">[br-enp2s0f1-prv] (up) MAC: 78:E3:B5:1A:2C:6B, speed unknown</div></div>
<div class="row" style="top:911px"><svg class="a" style="left:9px;top:5px" width="100" height="22" viewBox="0 0 100 22"><circle cx="11" cy="10" r="8.1" fill="#229cf0"/><path d="M8.9 7.6a2.3 2.3 0 1 1 3.4 2c-.8.45-1 .8-1 1.5" stroke="#fff" stroke-width="1.5" fill="none"/><path d="M1 11.5h5V8l7 5.6-7 5.4v-3.4H1z" fill="#3f51b5"/><circle cx="35.1" cy="10" r="8.1" fill="#f0443a"/><path d="M31.8 6.4l7 7M38.8 6.4l-7 7" stroke="#fff" stroke-width="1.6"/><path d="M25 11.5h5V8l7 5.6-7 5.4v-3.4H25z" fill="#3f51b5"/><g stroke-linecap="round" stroke-width="1.9"><path d="M51.5 3.9h4.5" stroke="#d3dce0"/><path d="M57 3.9h9.5" stroke="#ff6a00"/><path d="M51.5 10h10" stroke="#d3dce0"/><path d="M62.5 10h4" stroke="#ff6a00"/><path d="M51.5 15.7h3" stroke="#d3dce0"/><path d="M55.5 15.7h11" stroke="#ff6a00"/></g><rect x="55.6" y="1.8" width="2.2" height="4.2" rx="1.1" fill="#cc3b0c"/><rect x="61" y="7.9" width="2.2" height="4.2" rx="1.1" fill="#cc3b0c"/><rect x="54" y="13.6" width="2.2" height="4.2" rx="1.1" fill="#cc3b0c"/><rect x="75.5" y="10.3" width="4" height="7.2" fill="#86c044"/><rect x="80.9" y="7" width="4.1" height="10.5" fill="#ffc107"/><rect x="86.2" y="2.5" width="4.3" height="15" fill="#e67e22"/></svg><div class="st">OK</div><div class="sv">Interface 14</div><div class="dt">[br-ens1-bmc] (up) MAC: 00:13:3B:12:09:0E, speed unknown</div></div>
<div class="row" style="top:945px"><svg class="a" style="left:9px;top:5px" width="100" height="22" viewBox="0 0 100 22"><circle cx="11" cy="10" r="8.1" fill="#229cf0"/><path d="M8.9 7.6a2.3 2.3 0 1 1 3.4 2c-.8.45-1 .8-1 1.5" stroke="#fff" stroke-width="1.5" fill="none"/><path d="M1 11.5h5V8l7 5.6-7 5.4v-3.4H1z" fill="#3f51b5"/><circle cx="35.1" cy="10" r="8.1" fill="#f0443a"/><path d="M31.8 6.4l7 7M38.8 6.4l-7 7" stroke="#fff" stroke-width="1.6"/><path d="M25 11.5h5V8l7 5.6-7 5.4v-3.4H25z" fill="#3f51b5"/><g stroke-linecap="round" stroke-width="1.9"><path d="M51.5 3.9h4.5" stroke="#d3dce0"/><path d="M57 3.9h9.5" stroke="#ff6a00"/><path d="M51.5 10h10" stroke="#d3dce0"/><path d="M62.5 10h4" stroke="#ff6a00"/><path d="M51.5 15.7h3" stroke="#d3dce0"/><path d="M55.5 15.7h11" stroke="#ff6a00"/></g><rect x="55.6" y="1.8" width="2.2" height="4.2" rx="1.1" fill="#cc3b0c"/><rect x="61" y="7.9" width="2.2" height="4.2" rx="1.1" fill="#cc3b0c"/><rect x="54" y="13.6" width="2.2" height="4.2" rx="1.1" fill="#cc3b0c"/><rect x="75.5" y="10.3" width="4" height="7.2" fill="#86c044"/><rect x="80.9" y="7" width="4.1" height="10.5" fill="#ffc107"/><rect x="86.2" y="2.5" width="4.3" height="15" fill="#e67e22"/></svg><div class="st">OK</div><div class="sv">Interface 15</div><div class="dt"></div></div>
<div class="a" style="left:311px;top:944px;width:739px;height:4px;background:#2b2f33"></div>
</div>
<div class="a" style="left:1905px;top:0;width:15px;height:948px;background:#f1f1f1"></div>
<div class="a" style="left:1907px;top:14px;width:11px;height:562px;background:#c1c1c1"></div>
<div class="a" style="left:1908.5px;top:5px;width:0;height:0;border-left:4px solid transparent;border-right:4px solid transparent;border-bottom:4px solid #a3a3a3"></div>
<div class="a" style="left:1909px;top:938px;width:0;height:0;border-left:3.5px solid transparent;border-right:3.5px solid transparent;border-top:3.5px solid #505050"></div>
<svg class="a" style="left:0;top:0" width="1920" height="948"><path shape-rendering="crispEdges" d="M295.1 194.7L363.3 123.1 343.8 126.6 343.8 121.9 378.1 111.9 378.1 117.7 370.2 140.9 364.9 140.9 367.5 127.7 300 198.9 295.1 198.9z" fill="#ff0000"/></svg>
</body></html>
